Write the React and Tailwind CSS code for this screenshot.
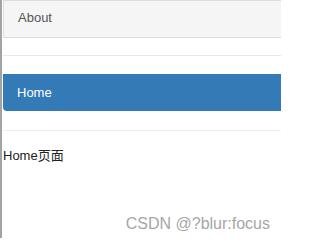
import React from "react";

function App() {
  return (
    <div
      className="relative h-[238px] w-[281px] overflow-hidden bg-white"
      style={{ fontFamily: '"Liberation Sans", Arial, "Noto Sans CJK SC", sans-serif' }}
    >
      {/* page area with grey window edge on the left */}
      <div className="flex h-full border-l-2 border-[#a3a3a3] pl-px">
        <div className="flex-1 flex flex-col">
          {/* About item */}
          <div className="h-[38px] border border-r-0 border-[#dddddd] bg-[#f5f5f5] pl-[14px] text-[13px] leading-[34px] text-[#555555]">
            About
          </div>

          <div className="h-[17px]" />
          <div className="h-px bg-[#e8e8e8]" />
          <div className="h-[18px]" />

          {/* active Home pill */}
          <div className="h-[37px] rounded-bl-[4px] bg-[#337ab7] pl-[14px] text-[13px] leading-[37px] text-white">
            Home
          </div>

          <div className="h-[19px]" />
          <div className="h-px bg-[#eeeeee]" />

          {/* routed view */}
          <p className="mt-[15px] text-[13px] leading-[20px] text-[#222222]">Home页面</p>
        </div>
      </div>

      {/* watermark */}
      <span className="absolute right-[11px] top-[214px] text-[16px] leading-[20px] text-[#a6a6a6]">
        CSDN @?blur:focus
      </span>
    </div>
  );
}

export default App;
